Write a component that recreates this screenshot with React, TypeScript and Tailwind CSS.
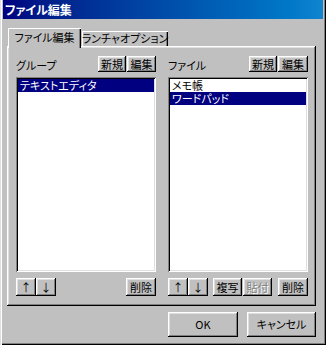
import React from 'react'

const raised =
  'shadow-[inset_-1px_-1px_#000,inset_1px_1px_#fff,inset_-2px_-2px_#808080,inset_2px_2px_#dfdfdf]'
const sunken =
  'shadow-[inset_1px_1px_#808080,inset_-1px_-1px_#fff,inset_2px_2px_#000,inset_-2px_-2px_#dfdfdf]'

function Btn({
  label,
  w,
  h = 'h-[18px]',
  disabled = false,
}: {
  label: string
  w: string
  h?: string
  disabled?: boolean
}) {
  return (
    <div
      className={`${w} ${h} ${raised} bg-[#c0c0c0] flex items-center justify-center shrink-0 whitespace-nowrap ${
        disabled ? 'text-[#808080] [text-shadow:1px_1px_#fff]' : 'text-black'
      }`}
    >
      <span className="leading-none">{label}</span>
    </div>
  )
}

function ListBox({ items, selected }: { items: string[]; selected: number }) {
  return (
    <div className={`w-[140px] h-[195px] bg-white ${sunken} p-[2px]`}>
      {items.map((item, i) => (
        <div
          key={item}
          className={`h-[13px] flex items-center pl-[2px] whitespace-nowrap ${
            i === selected ? 'bg-[#000080] text-white' : 'text-black'
          }`}
        >
          <span className="leading-none">{item}</span>
        </div>
      ))}
    </div>
  )
}

export default function App() {
  return (
    <div className="w-[326px] h-[345px] bg-[#c0c0c0] flex flex-col px-[3px] pb-[3px] text-[11px] font-['Noto_Sans_CJK_JP','Noto_Sans',sans-serif] [font-feature-settings:'palt'] shadow-[inset_1px_0_#dfdfdf,inset_2px_0_#fff,inset_-1px_-1px_#000,inset_-2px_-2px_#808080]">
      {/* title bar */}
      <div className="h-[19px] bg-gradient-to-r from-[#000080] to-[#1084d0] flex items-center pl-[2px]">
        <span className="text-white font-bold text-[12px] leading-none">ファイル編集</span>
      </div>

      {/* tabs */}
      <div className="flex items-end ml-[5px] mt-[9px] h-[18px] whitespace-nowrap">
        <div className="relative z-10 w-[73px] h-[20px] -mb-[2px] bg-[#c0c0c0] flex items-start justify-center pt-[4px] shadow-[inset_1px_1px_#fff,inset_-1px_0_#000,inset_-2px_0_#808080]">
          <span className="leading-none">ファイル編集</span>
        </div>
        <div className="w-[86px] h-[15px] ml-[1px] bg-[#c0c0c0] flex items-center justify-center shadow-[inset_1px_1px_#fff,inset_-1px_0_#000,inset_-2px_0_#808080]">
          <span className="leading-none">ランチャオプション</span>
        </div>
      </div>

      {/* panel */}
      <div className={`ml-[4px] w-[309px] h-[260px] ${raised} pt-[10px] pl-[9px] flex gap-[12px]`}>
        {/* group column */}
        <div className="flex flex-col w-[140px]">
          <div className="flex items-center h-[16px]">
            <span className="leading-none mt-[3px]">グループ</span>
            <div className="ml-auto flex gap-[1px]">
              <Btn label="新規" w="w-[28px]" h="h-[16px]" />
              <Btn label="編集" w="w-[29px]" h="h-[16px]" />
            </div>
          </div>
          <div className="mt-[5px]">
            <ListBox items={['テキストエディタ']} selected={0} />
          </div>
          <div className="mt-[6px] flex">
            <Btn label="↑" w="w-[20px]" />
            <Btn label="↓" w="w-[20px]" />
            <div className="ml-auto">
              <Btn label="削除" w="w-[30px]" />
            </div>
          </div>
        </div>

        {/* file column */}
        <div className="flex flex-col w-[140px]">
          <div className="flex items-center h-[16px]">
            <span className="leading-none mt-[3px]">ファイル</span>
            <div className="ml-auto flex gap-[1px]">
              <Btn label="新規" w="w-[28px]" h="h-[16px]" />
              <Btn label="編集" w="w-[30px]" h="h-[16px]" />
            </div>
          </div>
          <div className="mt-[5px]">
            <ListBox items={['メモ帳', 'ワードパッド']} selected={1} />
          </div>
          <div className="mt-[6px] flex">
            <Btn label="↑" w="w-[20px]" />
            <Btn label="↓" w="w-[20px]" />
            <div className="ml-[5px] flex gap-[1px]">
              <Btn label="複写" w="w-[29px]" />
              <Btn label="貼付" w="w-[29px]" disabled />
            </div>
            <div className="ml-auto">
              <Btn label="削除" w="w-[30px]" />
            </div>
          </div>
        </div>
      </div>

      {/* dialog buttons */}
      <div className="flex justify-end gap-[9px] mt-[6px] mr-[7px]">
        <Btn label="OK" w="w-[70px]" h="h-[25px]" />
        <Btn label="キャンセル" w="w-[69px]" h="h-[25px]" />
      </div>
    </div>
  )
}
